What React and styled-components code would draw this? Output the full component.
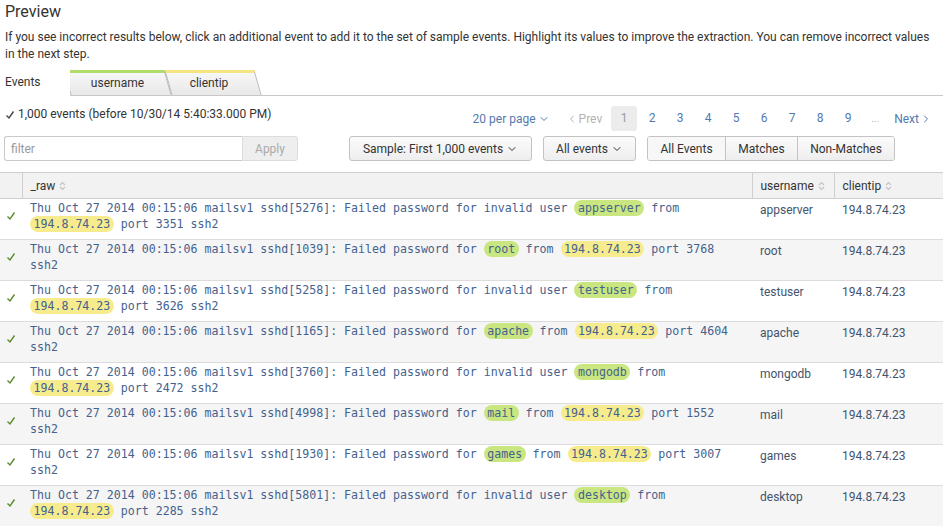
import React from 'react'
import styled, { createGlobalStyle } from 'styled-components'
import { ChevronDown, ChevronLeft, ChevronRight } from 'lucide-react'

const GlobalStyle = createGlobalStyle`
  html, body {
    margin: 0;
    padding: 0;
    background: #ffffff;
    font-family: Roboto, "Liberation Sans", Arial, sans-serif;
    color: #333333;
  }
  * { box-sizing: border-box; }
`

const Page = styled.div`
  width: 943px;
  height: 526px;
  overflow: hidden;
`

const Title = styled.h2`
  margin: 0;
  padding: 0 5px;
  font-size: 16px;
  font-weight: 400;
  line-height: 24px;
  color: #333;
`

const Description = styled.p`
  margin: 5px 0 0;
  padding: 0 4px 0 5px;
  font-size: 12px;
  line-height: 17px;
  color: #333;
`

const TabBar = styled.div`
  display: flex;
  height: 26px;
  margin-top: 7px;
  border-bottom: 1px solid #c8c8c8;
  isolation: isolate;
`

const ActiveTab = styled.div`
  width: 70px;
  height: 26px;
  padding: 0 5px;
  line-height: 24px;
  font-size: 12px;
  color: #333;
  background: #fff;
  position: relative;
  z-index: 3;
`

const Tab = styled.div`
  position: relative;
  width: ${p => p.$width}px;
  height: 25px;
  margin-left: ${p => p.$offset || 0}px;
  padding-right: ${p => p.$shift}px;
  text-align: center;
  line-height: 26px;
  font-size: 12px;
  color: #333;
  z-index: ${p => p.$z};

  &::before {
    content: '';
    position: absolute;
    inset: 0;
    transform: skewX(16deg);
    background: linear-gradient(#f7f7f7, #e8e8e8);
    border-top: 3px solid ${p => p.$accent};
    border-left: 1px solid #b9b9b9;
    border-right: 1px solid #b9b9b9;
    z-index: -1;
  }
`

const Toolbar = styled.div`
  display: flex;
  justify-content: space-between;
  align-items: flex-start;
  height: 25px;
  margin-top: 10px;
  padding: 0 11px 0 5px;
`

const Count = styled.div`
  font-size: 12px;
  line-height: 17px;
  color: #333;
  display: flex;
  align-items: center;
  gap: 3px;
`

const Pager = styled.div`
  display: flex;
  align-items: center;
  height: 25px;
  font-size: 12px;
`

const PerPage = styled.span`
  color: #5379af;
  display: flex;
  align-items: center;
  gap: 2px;
  margin-right: 16px;
`

const PagerLink = styled.span`
  color: ${p => (p.$disabled ? '#b3b3b3' : '#5379af')};
  display: flex;
  align-items: center;
  gap: 1px;
  margin: ${p => p.$margin || '0'};
`

const PageNum = styled.span`
  width: 26px;
  height: 25px;
  margin: 0 1px;
  line-height: 25px;
  text-align: center;
  border-radius: 3px;
  color: ${p => (p.$active ? '#999' : '#5379af')};
  background: ${p => (p.$active ? '#ececec' : 'transparent')};
`

const Ellipsis = styled.span`
  width: 26px;
  text-align: center;
  color: #bbb;
  font-size: 10px;
`

const Controls = styled.div`
  display: flex;
  align-items: center;
  gap: 11px;
  margin-top: 5px;
  padding-left: 4px;
`

const FilterGroup = styled.div`
  display: flex;
  height: 25px;
  margin-right: 40px;
`

const FilterInput = styled.input`
  width: 238px;
  height: 25px;
  border: 1px solid #c9c9c9;
  border-right: none;
  border-radius: 3px 0 0 3px;
  padding: 0 6px;
  font-family: Roboto, "Liberation Sans", Arial, sans-serif;
  font-size: 12px;
  color: #333;
  outline: none;
  &::placeholder { color: #999; }
`

const ApplyButton = styled.button`
  width: 56px;
  height: 25px;
  border: 1px solid #dcdcdc;
  border-radius: 0 3px 3px 0;
  background: #eeeeee;
  color: #aaa;
  font-family: Roboto, "Liberation Sans", Arial, sans-serif;
  font-size: 12px;
  padding: 0;
`

const DropButton = styled.button`
  width: ${p => p.$width}px;
  height: 25px;
  border: 1px solid #c3c3c3;
  border-radius: 3px;
  background: linear-gradient(#fbfbfb, #eeeeee);
  color: #333;
  font-family: Roboto, "Liberation Sans", Arial, sans-serif;
  font-size: 12px;
  display: flex;
  align-items: center;
  justify-content: center;
  gap: 3px;
  padding: 0;
`

const Segmented = styled.div`
  display: flex;
  height: 25px;
  border: 1px solid #c3c3c3;
  border-radius: 3px;
  overflow: hidden;
`

const Segment = styled.button`
  width: ${p => p.$width}px;
  height: 23px;
  border: none;
  border-left: ${p => (p.$first ? 'none' : '1px solid #c3c3c3')};
  background: ${p => (p.$active ? '#f7f7f7' : 'linear-gradient(#fbfbfb, #eeeeee)')};
  color: #333;
  font-family: Roboto, "Liberation Sans", Arial, sans-serif;
  font-size: 12px;
  padding: 0;
`

const Table = styled.table`
  width: 943px;
  margin-top: 11px;
  border-collapse: collapse;
  table-layout: fixed;
`

const HeadCell = styled.th`
  height: 26px;
  padding: 0 8px;
  text-align: left;
  font-weight: 400;
  font-size: 12px;
  color: #333;
  background: #f2f2f2;
  border-top: 1px solid #cfcfcf;
  border-bottom: 1px solid #cfcfcf;
  border-left: ${p => (p.$first ? 'none' : '1px solid #cfcfcf')};
`

const HeadLabel = styled.span`
  display: inline-flex;
  align-items: center;
  gap: 4px;
`

const Row = styled.tr`
  background: ${p => (p.$odd ? '#f5f5f5' : '#ffffff')};
  border-bottom: 1px solid #dcdcdc;
`

const Cell = styled.td`
  vertical-align: top;
  height: 40px;
  padding: 3px 8px 5px;
  font-size: 12px;
  line-height: 16px;
  color: #44546c;
`

const CheckCell = styled.td`
  vertical-align: top;
  padding: 7px 0 0 6px;
`

const Raw = styled.td`
  vertical-align: top;
  padding: 1px 8px 7px;
  font-family: "DejaVu Sans Mono", "Liberation Mono", monospace;
  font-size: 11.6px;
  line-height: 16px;
  color: #45628e;
  white-space: normal;
`

const Hl = styled.span`
  padding: 1px 3.5px;
  border-radius: 9px;
  background: ${p => (p.$kind === 'user' ? '#c9e680' : '#f7ec8d')};
`

const SortIcon = () => (
  <svg width="7" height="10" viewBox="0 0 7 10">
    <path d="M1 4 L3.5 1.5 L6 4 M1 6 L3.5 8.5 L6 6" fill="none" stroke="#c4c4c4" strokeWidth="1.2" />
  </svg>
)

const Check = ({ color = '#5b8a2c' }) => (
  <svg width="10" height="10" viewBox="0 0 10 10">
    <path d="M1.5 5.5 L4 8 L8.5 1.5" fill="none" stroke={color} strokeWidth="1.4" />
  </svg>
)

const events = [
  { pid: 5276, user: 'appserver', invalid: true, port: 3351 },
  { pid: 1039, user: 'root', invalid: false, port: 3768 },
  { pid: 5258, user: 'testuser', invalid: true, port: 3626 },
  { pid: 1165, user: 'apache', invalid: false, port: 4604 },
  { pid: 3760, user: 'mongodb', invalid: true, port: 2472 },
  { pid: 4998, user: 'mail', invalid: false, port: 1552 },
  { pid: 1930, user: 'games', invalid: false, port: 3007 },
  { pid: 5801, user: 'desktop', invalid: true, port: 2285 },
]

const IP = '194.8.74.23'

export default function App() {
  return (
    <Page>
      <GlobalStyle />
      <Title>Preview</Title>
      <Description>
        If you see incorrect results below, click an additional event to add it to the set of sample events. Highlight its values to improve the extraction. You can remove incorrect values in the next step.
      </Description>

      <TabBar>
        <ActiveTab>Events</ActiveTab>
        <Tab $width={101} $shift={0} $offset={-3} $accent="#b0dc6a" $z={2}>username</Tab>
        <Tab $width={90} $shift={8} $accent="#f4e482" $z={1}>clientip</Tab>
      </TabBar>

      <Toolbar>
        <Count><Check color="#444" /> 1,000 events (before 10/30/14 5:40:33.000 PM)</Count>
        <Pager>
          <PerPage>20 per page <ChevronDown size={12} strokeWidth={2} /></PerPage>
          <PagerLink $disabled $margin="0 8px 0 0"><ChevronLeft size={12} strokeWidth={2} />Prev</PagerLink>
          {[1, 2, 3, 4, 5, 6, 7, 8, 9].map(n => (
            <PageNum key={n} $active={n === 1}>{n}</PageNum>
          ))}
          <Ellipsis>...</Ellipsis>
          <PagerLink $margin="0 0 0 6px">Next<ChevronRight size={12} strokeWidth={2} /></PagerLink>
        </Pager>
      </Toolbar>

      <Controls>
        <FilterGroup>
          <FilterInput placeholder="filter" />
          <ApplyButton>Apply</ApplyButton>
        </FilterGroup>
        <DropButton $width={183}>Sample: First 1,000 events <ChevronDown size={12} strokeWidth={2} /></DropButton>
        <DropButton $width={93}>All events <ChevronDown size={12} strokeWidth={2} /></DropButton>
        <Segmented>
          <Segment $first $active $width={77}>All Events</Segment>
          <Segment $width={72}>Matches</Segment>
          <Segment $width={97}>Non-Matches</Segment>
        </Segmented>
      </Controls>

      <Table>
        <colgroup>
          <col style={{ width: 22 }} />
          <col style={{ width: 730 }} />
          <col style={{ width: 82 }} />
          <col style={{ width: 109 }} />
        </colgroup>
        <thead>
          <tr>
            <HeadCell $first />
            <HeadCell><HeadLabel>_raw <SortIcon /></HeadLabel></HeadCell>
            <HeadCell><HeadLabel>username <SortIcon /></HeadLabel></HeadCell>
            <HeadCell><HeadLabel>clientip <SortIcon /></HeadLabel></HeadCell>
          </tr>
        </thead>
        <tbody>
          {events.map((e, i) => (
            <Row key={e.pid} $odd={i % 2 === 1}>
              <CheckCell><Check /></CheckCell>
              <Raw>
                Thu Oct 27 2014 00:15:06 mailsv1 sshd[{e.pid}]: Failed password for {e.invalid ? 'invalid user ' : ''}
                <Hl $kind="user">{e.user}</Hl> from <Hl $kind="ip">{IP}</Hl> port {e.port} ssh2
              </Raw>
              <Cell>{e.user}</Cell>
              <Cell>{IP}</Cell>
            </Row>
          ))}
        </tbody>
      </Table>
    </Page>
  )
}
